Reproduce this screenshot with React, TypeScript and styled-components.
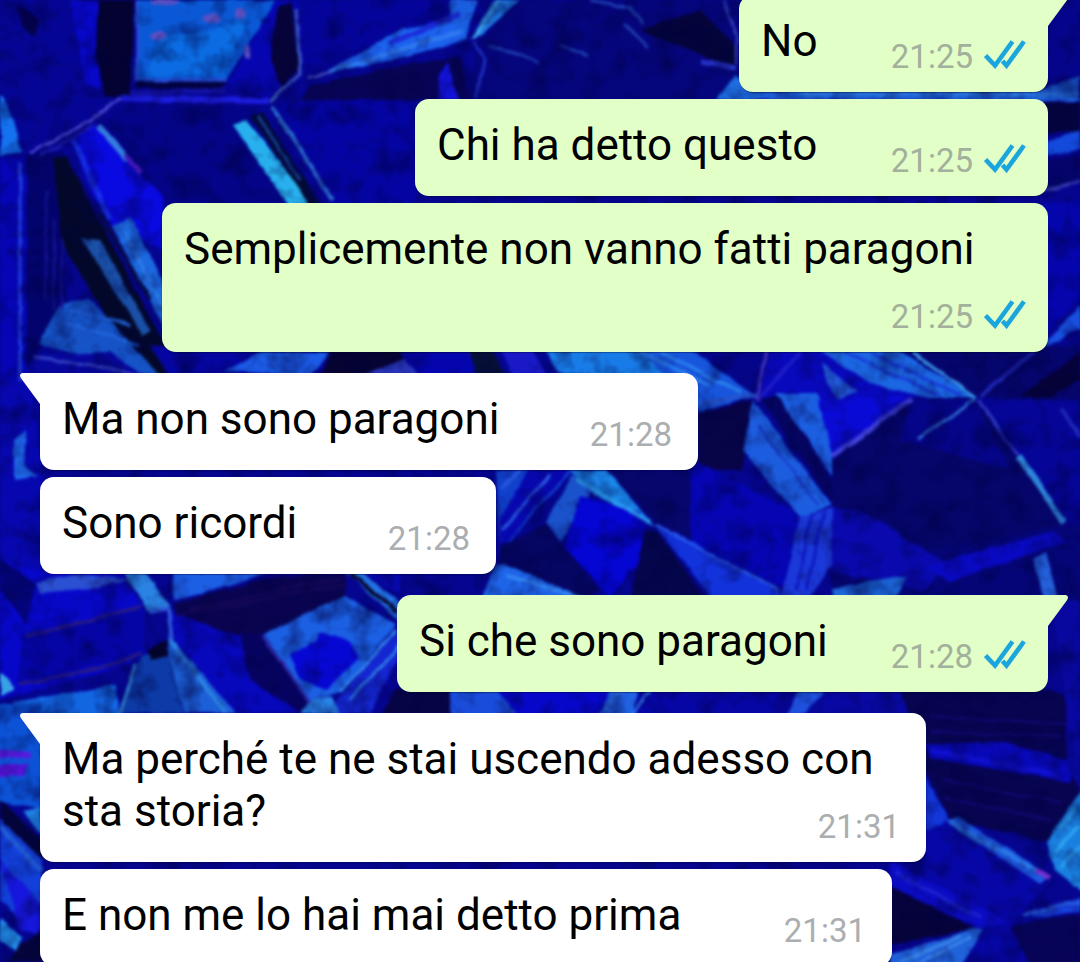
import React from "react";
import styled, { createGlobalStyle, css } from "styled-components";

const GlobalStyle = createGlobalStyle`
  *, *::before, *::after { box-sizing: border-box; }
  html, body { margin: 0; padding: 0; }
  body { background: #03038c; }
`;

const Screen = styled.main`
  position: relative;
  height: 100vh;
  overflow: hidden;
  font-family: Roboto, "Liberation Sans", sans-serif;
`;

const WallpaperSvg = styled.svg`
  position: absolute;
  inset: 0;
  width: 100%;
  height: 100%;
`;

const Thread = styled.ol`
  position: relative;
  display: flex;
  flex-direction: column;
  gap: 21px;
  list-style: none;
  margin: -5px 0 0;
  padding: 0 32px 0 40px;
`;

const Group = styled.li<{ $out: boolean }>`
  display: flex;
  flex-direction: column;
  align-items: ${(p) => (p.$out ? "flex-end" : "flex-start")};
  gap: 7px;
`;

const Bubble = styled.article<{ $out: boolean; $tail: boolean; $width: number }>`
  position: relative;
  display: flow-root;
  width: ${(p) => p.$width}px;
  max-width: 100%;
  padding: 20px ${(p) => (p.$out ? 22 : 26)}px 14px 22px;
  border-radius: 14px;
  background: ${(p) => (p.$out ? "#e1ffc7" : "#ffffff")};
  box-shadow: 0 1px 1px rgba(0, 0, 30, 0.35);
  ${(p) =>
    p.$tail &&
    (p.$out
      ? css`
          border-top-right-radius: 0;
        `
      : css`
          border-top-left-radius: 0;
        `)}
`;

const TailSvg = styled.svg<{ $out: boolean }>`
  position: absolute;
  top: 0;
  ${(p) => (p.$out ? "right: -20px;" : "left: -20px; transform: scaleX(-1);")}
  width: 21px;
  height: 32px;
  fill: ${(p) => (p.$out ? "#e1ffc7" : "#ffffff")};
`;

const Text = styled.span`
  font-size: 44px;
  line-height: 52px;
  color: #000;
`;

const Meta = styled.span<{ $out: boolean }>`
  float: right;
  display: flex;
  align-items: flex-start;
  gap: 11px;
  margin-top: 22px;
  height: 41px;
  font-size: 33px;
  line-height: 40px;
  color: ${(p) => (p.$out ? "#a3b09c" : "#abaeb0")};
`;

const TicksSvg = styled.svg`
  width: 42px;
  height: 32px;
  fill: none;
  stroke: #1ba5dd;
`;

function Tail({ out }: { out: boolean }) {
  return (
    <TailSvg $out={out} viewBox="0 0 21 32" aria-hidden="true">
      <path d="M0 0H18.500Q21 .3 21 2.500Q20.900 4 19.800 5.400L1 31H0Z" />
    </TailSvg>
  );
}

function ReadTicks() {
  return (
    <TicksSvg viewBox="0 0 42 32" strokeWidth="4.6" role="img" aria-label="Letto">
      <path d="M1.500 18.500L11 28.500L28.500 4.500" />
      <path d="M18.500 24L22.500 28.500L40 4.500" />
    </TicksSvg>
  );
}

type Shape = [points: string, fill: string];
type Ridge = [path: string, stroke: string, width: number];

const facets: Shape[] = [
  // upper left
  ["0,0 140,0 130,98 92,120 30,153 18,140 0,95", "#050595"],
  ["70,0 98,0 100,90 85,80", "#0707c8"],
  ["98,0 134,0 130,95 105,98 96,50", "#030230"],
  ["20,5 40,20 34,36 22,26", "#03024a"],
  ["137,0 275,0 262,22 226,80 137,79", "#0a58d6"],
  ["160,35 215,30 250,14 225,75 145,76", "#0b6be2"],
  ["137,82 226,82 220,90 135,88", "#020240"],
  ["275,0 300,0 303,78 268,98 228,84", "#0606b0"],
  ["278,5 292,2 298,70 282,88 270,60", "#060338"],
  ["303,0 470,0 462,30 385,38 318,78 303,70", "#04049a"],
  ["0,94 8,105 22,152 0,155", "#1472ee"],
  ["0,156 26,158 26,380 0,380", "#0505b6"],
  ["27,155 62,152 66,300 40,350 26,372", "#03036e"],
  ["130,103 266,103 240,122 285,204 160,204 98,124", "#040488"],
  ["72,140 95,124 162,196 162,250 112,226 90,190", "#0909e2"],
  ["52,158 66,156 165,345 200,380 145,380 62,245", "#03082a"],
  ["112,226 132,218 164,285 164,328 140,280", "#1c68de"],
  ["82,238 100,240 150,330 142,335", "#1a50a8"],
  ["62,302 90,300 128,340 160,378 40,344 42,335", "#1553c6"],
  ["35,355 110,352 150,380 35,380", "#07079e"],
  ["232,125 246,120 278,160 312,206 290,206", "#28b0ee"],
  ["250,116 262,112 322,206 310,206", "#030a35"],
  ["272,104 416,98 416,206 330,206", "#0404a2"],
  ["310,85 415,62 462,58 470,100 300,100", "#070455"],
  // upper centre
  ["326,73 400,30 470,18 466,40 392,60", "#1c62ee"],
  ["450,0 478,0 464,38 452,22", "#1a5ee0"],
  ["470,40 495,0 520,0 482,34", "#2186ee"],
  ["476,42 520,0 740,0 740,100 470,100", "#05057c"],
  ["438,76 448,62 458,100 440,100", "#1212d8"],
  ["640,30 700,10 736,46 736,72 690,50", "#04043a"],
  ["735,75 760,90 760,100 715,100", "#1e6ee2"],
  ["760,90 1048,88 1080,76 1080,101 760,100", "#1b5cd2"],
  ["1020,0 1080,0 1080,76 1048,82 1020,50", "#05058c"],
  ["1040,102 1080,102 1080,132 1040,134", "#04033e"],
  ["1040,144 1080,130 1080,150 1040,156", "#134adc"],
  ["1040,160 1080,155 1080,182 1040,190", "#04046c"],
  ["1040,205 1080,200 1080,300 1040,335", "#0505ae"],
  ["1040,348 1080,305 1080,328 1048,346", "#184fdf"],
  // centre strip
  ["150,345 230,345 250,380 170,380", "#0505a2"],
  ["225,371 262,352 330,352 312,376", "#1b5ae4"],
  ["332,350 420,350 390,378 320,378", "#060330"],
  ["365,374 420,352 470,352 460,376", "#2a3ac4"],
  ["400,352 468,352 474,376 420,376", "#0505b0"],
  ["468,350 492,350 506,378 478,378", "#051035"],
  ["500,350 532,350 548,378 514,378", "#1919c8"],
  ["545,350 640,350 700,376 706,412 600,378 558,372", "#187ce8"],
  ["640,350 700,350 757,396 698,412", "#1755dd"],
  ["690,350 770,350 757,396", "#05058a"],
  ["772,350 820,350 930,400 757,400", "#0808bc"],
  ["820,350 898,350 975,398 930,398 870,384", "#1b66e2"],
  ["822,362 858,392 838,400 826,380", "#2158d8"],
  ["900,350 1080,345 1080,400 978,398", "#05056e"],
  ["1020,396 1080,352 1080,380 1050,398", "#050238"],
  ["698,414 752,400 742,470 698,470", "#080448"],
  ["698,462 800,515 800,595 660,530", "#0505b4"],
  ["753,400 832,505 800,517 744,452", "#1c5de0"],
  ["760,398 778,395 832,480 832,502", "#050460"],
  ["775,393 817,393 832,420 832,476", "#1b5ee0"],
  ["817,400 912,396 832,455 826,430", "#0a0ad6"],
  ["832,460 912,398 975,398 1062,522 1055,540 930,568 832,510", "#05056a"],
  ["912,398 975,400 1010,470 900,440", "#05058a"],
  ["985,400 1080,400 1080,520 1064,520", "#050598"],
  ["925,550 1050,528 1062,524 1080,525 1080,600 832,600 832,570", "#050578"],
  ["832,508 860,510 945,562 925,590 832,572", "#0909ae"],
  ["925,566 1052,532 1070,540 950,582", "#0909c2"],
  ["832,588 908,576 895,600 832,600", "#1b66d8"],
  ["1034,560 1046,552 1058,600 1044,600", "#2360da"],
  ["800,516 832,508 832,565 808,600 780,600", "#1b38d8"],
  ["496,470 572,470 500,552", "#1140cc"],
  ["528,470 568,470 500,550 500,518", "#0707ae"],
  ["570,470 606,470 656,528 620,508 590,492", "#1a86ea"],
  ["572,474 592,490 562,542 546,522", "#1a52cc"],
  ["580,496 640,512 652,545 610,598 565,548", "#0505d4"],
  ["606,470 690,470 690,540 656,524", "#06066c"],
  ["500,545 546,524 600,590 585,600 500,568", "#050562"],
  ["496,566 505,564 590,600 480,600", "#1e64e8"],
  ["655,526 690,540 790,598 712,598", "#1232dc"],
  ["645,530 658,532 705,598 630,598", "#05054c"],
  // lower left
  ["0,385 28,370 42,480 42,600 0,560", "#0707b0"],
  ["14,440 26,430 24,465 38,476 14,480", "#1e68ea"],
  ["0,560 40,570 120,572 145,612 130,665 0,700", "#0707ca"],
  ["0,560 36,584 26,625 0,590", "#04047a"],
  ["36,582 80,574 130,580 100,588 40,594", "#2b50d2"],
  ["22,637 142,608 145,655 16,684", "#0505a6"],
  ["124,572 145,572 171,606 148,611", "#2a82e2"],
  ["173,572 268,572 215,590 174,600", "#1c5ee4"],
  ["174,604 268,578 345,572 345,598 263,634 230,640 176,618", "#0a0450"],
  ["170,612 250,640 310,713 235,713 172,636", "#0707bc"],
  ["240,634 264,636 310,702 300,713 250,680", "#060360"],
  ["263,634 345,596 396,624 340,692 308,702", "#1b5fe2"],
  ["290,655 316,640 320,632 350,642 360,656 326,690 300,680", "#0707d4"],
  ["345,572 360,572 400,602 400,622", "#2272e4"],
  ["362,572 400,572 400,594", "#0808b0"],
  ["346,690 396,628 402,650 370,713 325,713", "#1426d0"],
  ["310,700 332,696 340,713 300,713", "#2984e8"],
  ["168,634 236,713 186,713 170,670", "#1c60d8"],
  ["142,655 168,652 184,713 120,713", "#0c3aa6"],
  ["148,650 168,640 168,656 150,660", "#04042a"],
  ["14,702 116,685 120,716 0,760", "#1266e2"],
  ["0,672 14,690 0,696", "#38a2e8"],
  ["396,688 450,688 450,716 380,716", "#070445"],
  ["450,688 500,688 520,716 450,716", "#194cda"],
  ["495,688 640,688 600,716 518,716", "#0707cc"],
  ["610,688 640,688 632,716 602,716", "#2162e4"],
  ["640,688 780,688 770,716 632,716", "#0606a4"],
  ["800,688 830,688 800,716 785,716", "#1d50dc"],
  ["830,688 960,688 900,716 800,716", "#0808a2"],
  // bottom left edge
  ["-20,704 42,704 42,810 -20,798", "#0c52d6"],
  ["-20,748 30,752 30,758 -20,760", "#5a18e0"],
  ["-20,768 28,764 24,776 -20,778", "#5414d8"],
  ["0,800 42,840 42,868 0,818", "#04043a"],
  ["22,812 42,808 42,836", "#1f80e4"],
  ["0,818 42,860 42,940 0,900", "#123fd8"],
  ["0,860 42,905 42,935 20,930", "#1616dc"],
  ["0,918 22,938 16,952 0,940", "#2294ee"],
  ["20,945 42,930 42,962 10,962", "#05053a"],
  // lower right
  ["900,690 1050,690 1080,700 1080,800 1048,842 950,820 925,770", "#070450"],
  ["925,744 1000,742 1070,760 1070,782 930,758", "#0808b8"],
  ["1050,600 1080,600 1080,790 1068,770 1064,690", "#0808a0"],
  ["925,776 948,818 926,835", "#1236d8"],
  ["925,830 950,820 1050,882 1010,925 925,880", "#0707a8"],
  ["945,820 960,818 1050,876 1040,884", "#1c58e0"],
  ["1100,776 1080,792 1047,842 1054,870 1080,890 1100,900", "#1a80e0"],
  ["890,862 1008,922 985,930 890,890", "#0b0bc4"],
  ["890,886 975,928 890,945", "#06033a"],
  ["890,955 975,928 985,930 962,965 890,965", "#2062da"],
  ["985,928 1010,922 1040,965 962,965", "#0606a4"],
  ["1020,915 1080,898 1080,912 1040,918", "#1740dc"],
  ["1010,926 1080,914 1080,965 1030,965", "#070458"],
];

const ridges: Ridge[] = [
  ["M30 153L92 120L120 98", "#4a48d2", 3],
  ["M40 156L94 126", "#1c1cae", 3],
  ["M137 0V80L226 80", "#2a50d4", 3],
  ["M122 98L268 101", "#1c1ce0", 6],
  ["M130 94L225 90", "#1212a8", 5],
  ["M296 8L300 74L270 102", "#4060b8", 3],
  ["M308 78L330 72", "#5566d8", 2],
  ["M20 160V380", "#2644d8", 3],
  ["M46 190V300M54 220V310M62 240V310", "#141498", 2],
  ["M98 126L128 160", "#347ce0", 7],
  ["M126 156L142 172", "#5a20e0", 5],
  ["M74 140L110 220", "#1830e8", 5],
  ["M100 214L150 300", "#060a48", 4],
  ["M125 232L163 310", "#2d7ce8", 3],
  ["M70 310L130 325M64 322L140 345", "#1f62da", 3],
  ["M35 358L100 366L150 378", "#3446c8", 3],
  ["M272 106L300 148L332 200", "#2a6acb", 4],
  ["M258 116L300 180", "#13449c", 3],
  ["M330 72L462 30", "#2f7af0", 4],
  ["M390 44L460 14", "#1a2ad8", 5],
  ["M474 38L500 0", "#4aaef0", 3],
  ["M474 42L484 60L476 98", "#1d2dc0", 3],
  ["M490 46L520 54L540 64M562 46L588 56M590 0L630 8L644 24M624 24L648 48", "#1c3cae", 3],
  ["M700 62L736 68", "#2632c8", 5],
  ["M724 0L736 36V64", "#3344c0", 2],
  ["M800 94H1080", "#2a78dc", 3],
  ["M1040 190L1080 182", "#3a40b8", 3],
  ["M660 352L740 392M640 352L710 386", "#2b86ee", 3],
  ["M698 404L757 394", "#2a55c8", 3],
  ["M800 352L757 400", "#1c1cc8", 4],
  ["M766 350L757 400", "#4434c0", 3],
  ["M845 352L940 396M870 352L960 396", "#1638d8", 3],
  ["M912 352L975 398", "#3a98e8", 3],
  ["M832 456L912 399", "#4142dc", 5],
  ["M918 440L975 399", "#2c67cc", 3],
  ["M978 400L1020 458", "#2c38c4", 3],
  ["M1018 456L1064 522", "#2e86da", 6],
  ["M980 396L1036 352M1060 408L1080 436", "#2028b8", 4],
  ["M758 426L818 505", "#1530c0", 2],
  ["M812 512L796 590M824 512L806 590", "#0c18c0", 3],
  ["M656 526L780 590", "#2858e8", 3],
  ["M576 480L650 522", "#2b9cee", 4],
  ["M500 490L520 470M502 530L550 474", "#2858dc", 3],
  ["M505 574L580 598", "#3488f0", 3],
  ["M26 637L142 606M18 685L110 666L140 654", "#2a1c80", 3],
  ["M150 612L168 608L172 640", "#2c58dc", 4],
  ["M176 616L344 584M190 610L340 578", "#150858", 3],
  ["M262 636L310 702", "#2b2aa8", 3],
  ["M350 574L398 612", "#04042a", 4],
  ["M340 692L396 630M350 700L400 645", "#3084ea", 3],
  ["M170 640L226 713", "#2b82e2", 4],
  ["M120 713L136 665", "#3180c8", 3],
  ["M600 716L622 690M632 716L650 690", "#3078ee", 3],
  ["M0 826L42 872", "#2262e2", 5],
  ["M930 716L1066 724M930 732L1060 736M940 780L1060 802M944 798L1050 820", "#150878", 2],
  ["M930 750L1060 776", "#1010d0", 5],
  ["M950 822L1046 876", "#2a78e6", 4],
  ["M1036 870L1050 878", "#7a30d0", 5],
  ["M1060 830L1076 808M1056 852L1078 826M1060 868L1080 846", "#2ca6f0", 3],
  ["M895 872L980 918", "#1a20d0", 4],
  ["M900 962L960 936M920 962L972 936", "#3a86e8", 3],
  ["M1024 916L1080 902", "#2a60e8", 3],
];

function Wallpaper() {
  return (
    <WallpaperSvg viewBox="0 0 1080 962" preserveAspectRatio="xMidYMid slice" aria-hidden="true">
      <defs>
        <filter id="crystal" x="0" y="0" width="100%" height="100%" colorInterpolationFilters="sRGB">
          <feTurbulence type="fractalNoise" baseFrequency="0.04" numOctaves="3" seed="8" result="noise" />
          <feDisplacementMap in="SourceGraphic" in2="noise" scale="5" xChannelSelector="R" yChannelSelector="G" result="rough" />
          <feGaussianBlur in="rough" stdDeviation="1.700" result="soft" />
          <feColorMatrix
            in="noise"
            type="matrix"
            values="0 0 0 0 0  0 0 0 0 0  0 0 0 0 0.250  1.200 0 0 0 -0.520"
            result="shade"
          />
          <feComposite in="shade" in2="soft" operator="over" />
        </filter>
      </defs>
      <g filter="url(#crystal)">
        <rect x="-20" y="-20" width="1120" height="1002" fill="#050590" />
        {facets.map(([points, fill]) => (
          <polygon key={points} points={points} fill={fill} />
        ))}
        {ridges.map(([d, stroke, width]) => (
          <path key={d} d={d} fill="none" stroke={stroke} strokeWidth={width} />
        ))}
        <g fill="#5a50c0">
          <ellipse cx="211" cy="19" rx="10" ry="5" />
          <ellipse cx="158" cy="36" rx="9" ry="4" />
          <ellipse cx="240" cy="13" rx="6" ry="5" />
          <ellipse cx="165" cy="2" rx="14" ry="3" />
          <ellipse cx="247" cy="52" rx="3" ry="7" />
        </g>
      </g>
    </WallpaperSvg>
  );
}

type Message = { text: string; time: string; width: number };
type MessageGroup = { out: boolean; messages: Message[] };

const groups: MessageGroup[] = [
  {
    out: true,
    messages: [
      { text: "No", time: "21:25", width: 309 },
      { text: "Chi ha detto questo", time: "21:25", width: 633 },
      { text: "Semplicemente non vanno fatti paragoni", time: "21:25", width: 886 },
    ],
  },
  {
    out: false,
    messages: [
      { text: "Ma non sono paragoni", time: "21:28", width: 658 },
      { text: "Sono ricordi", time: "21:28", width: 456 },
    ],
  },
  { out: true, messages: [{ text: "Si che sono paragoni", time: "21:28", width: 651 }] },
  {
    out: false,
    messages: [
      { text: "Ma perché te ne stai uscendo adesso con sta storia?", time: "21:31", width: 886 },
      { text: "E non me lo hai mai detto prima", time: "21:31", width: 852 },
    ],
  },
];

export default function App() {
  return (
    <Screen>
      <GlobalStyle />
      <Wallpaper />
      <Thread>
        {groups.map(({ out, messages }, g) => (
          <Group key={g} $out={out}>
            {messages.map((message, i) => (
              <Bubble key={message.text} $out={out} $tail={i === 0} $width={message.width}>
                {i === 0 && <Tail out={out} />}
                <Text>{message.text}</Text>
                <Meta $out={out}>
                  <time>{message.time}</time>
                  {out && <ReadTicks />}
                </Meta>
              </Bubble>
            ))}
          </Group>
        ))}
      </Thread>
    </Screen>
  );
}
